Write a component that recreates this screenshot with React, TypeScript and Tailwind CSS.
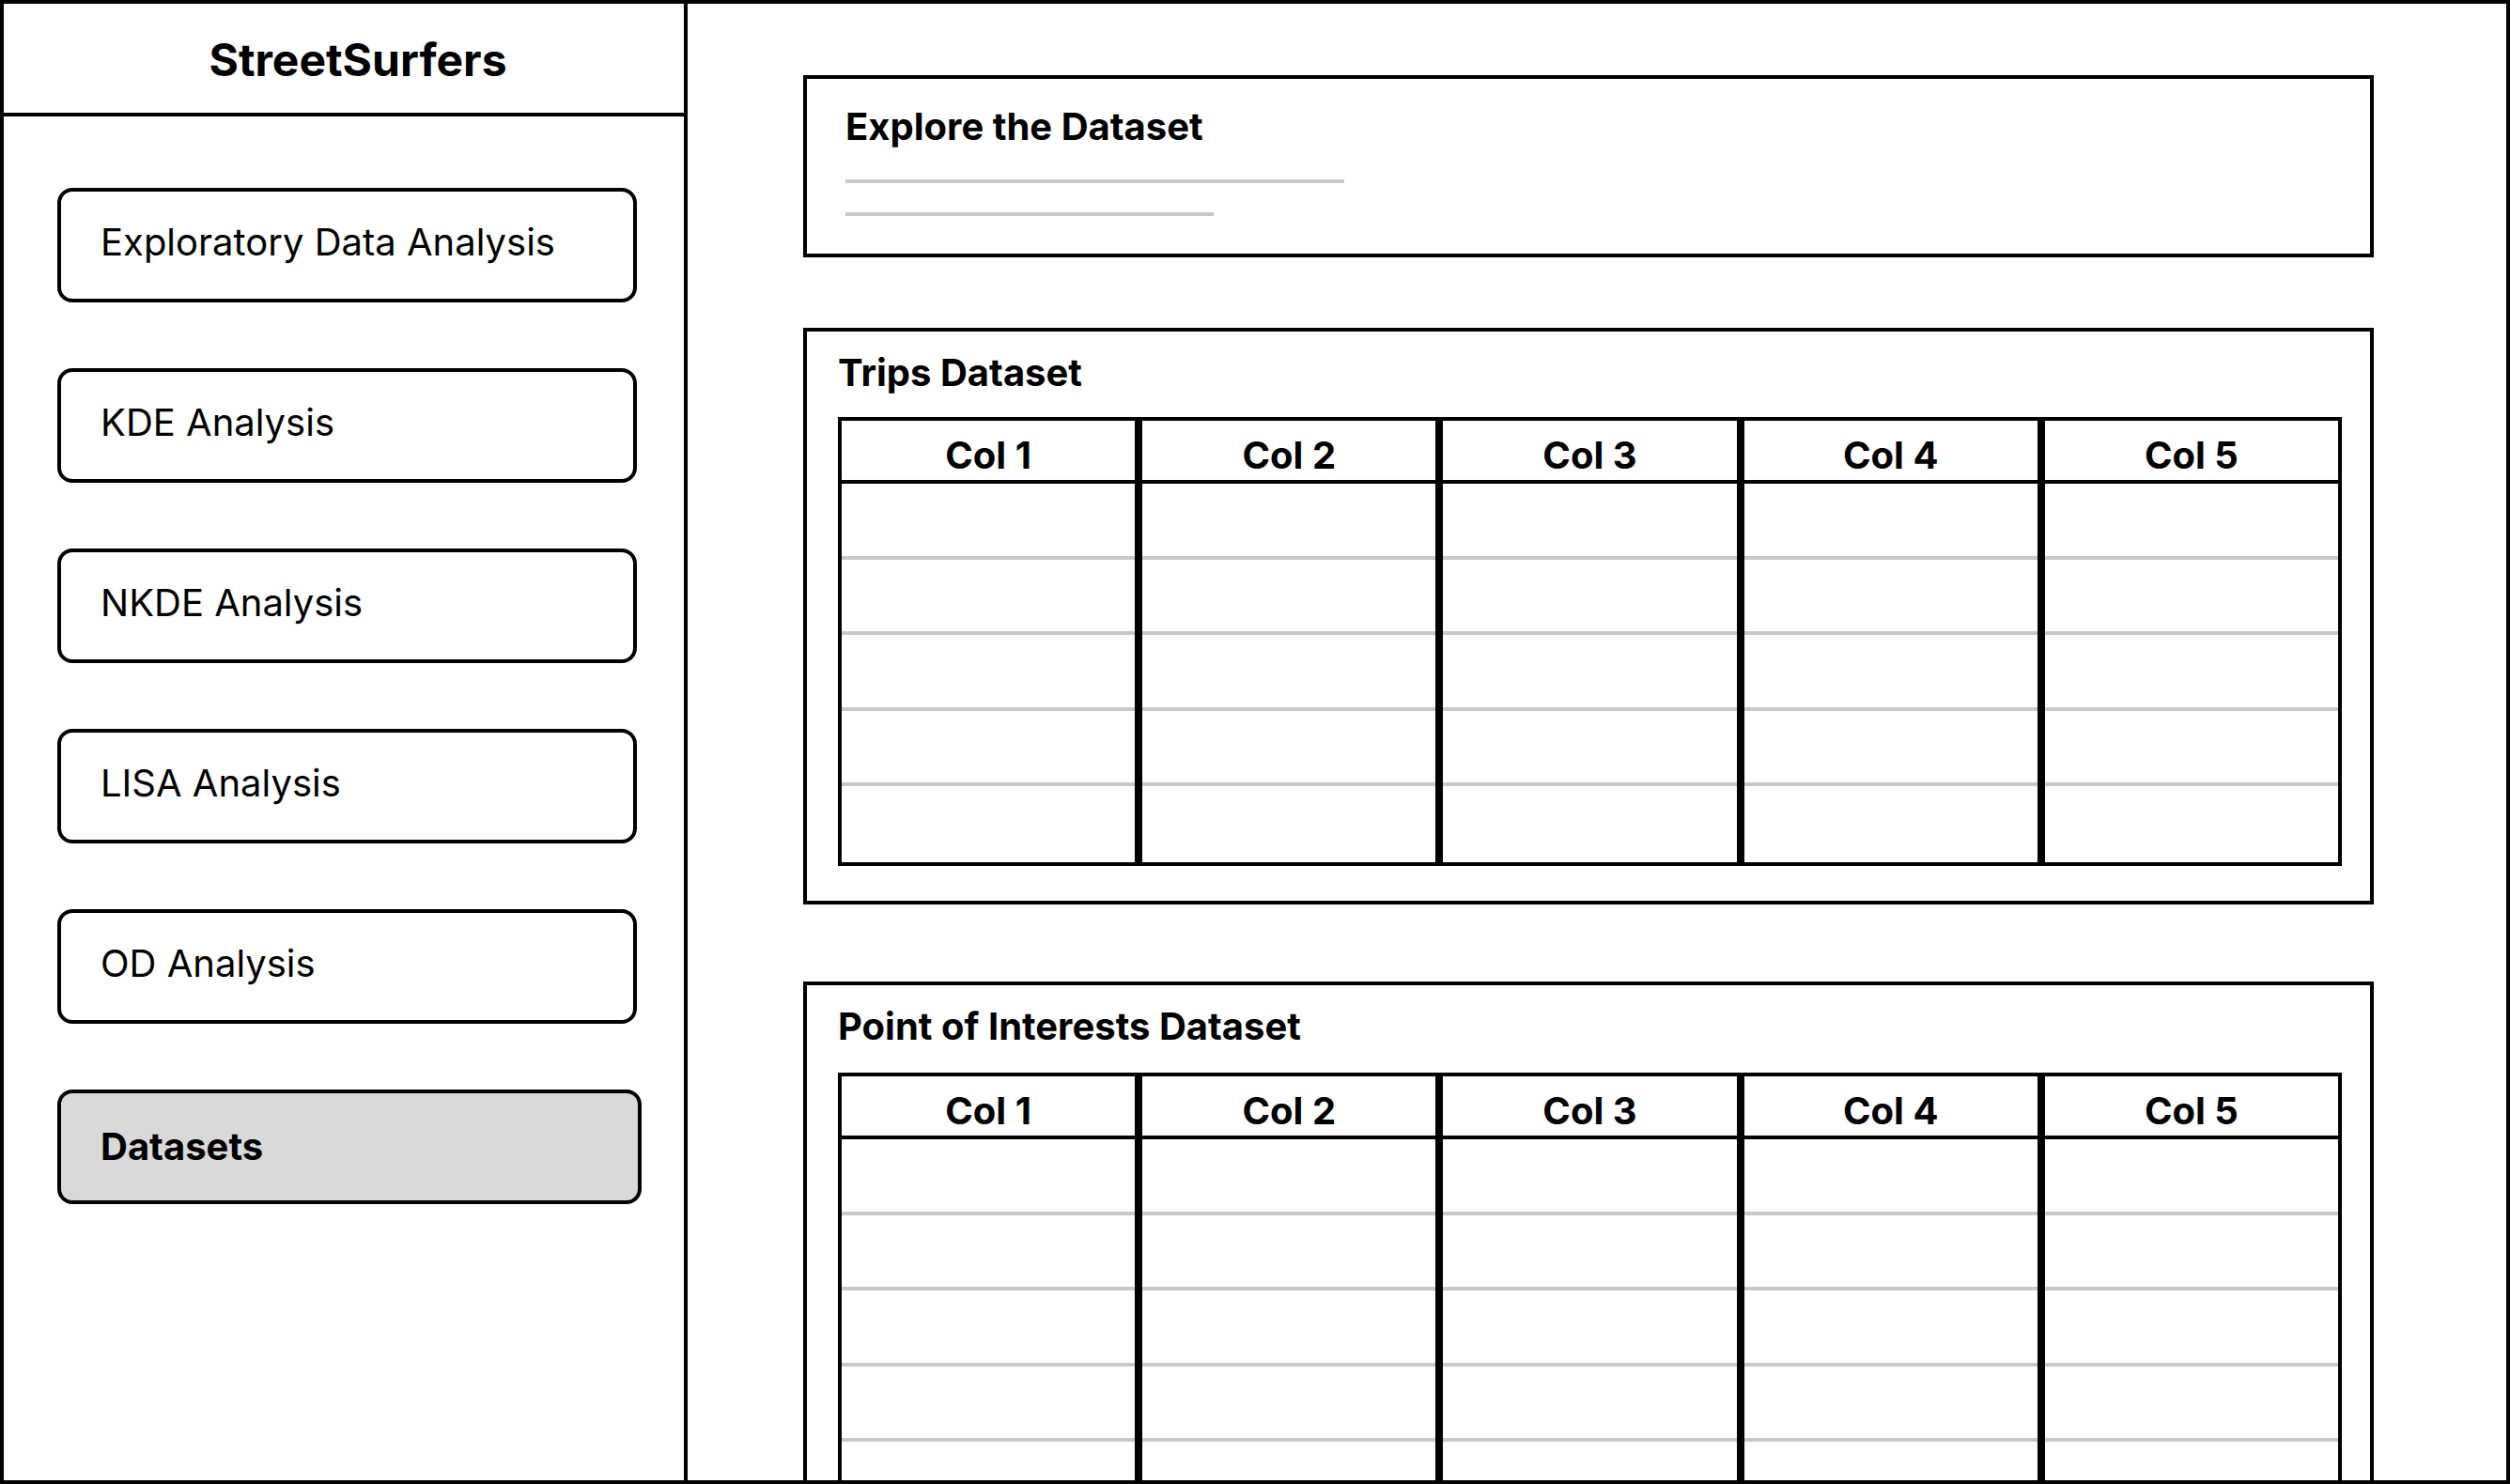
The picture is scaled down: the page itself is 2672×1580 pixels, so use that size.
const navItems = [
  'Exploratory Data Analysis',
  'KDE Analysis',
  'NKDE Analysis',
  'LISA Analysis',
  'OD Analysis',
];

const cols = ['Col 1', 'Col 2', 'Col 3', 'Col 4', 'Col 5'];

function DataTable() {
  return (
    <div className="grid grid-cols-5">
      {cols.map((c) => (
        <div key={c} className="flex flex-col border-4 border-black">
          <div className="h-[67px] border-b-4 border-black flex items-center justify-center pt-[10px] text-[40px] font-bold leading-none">
            {c}
          </div>
          <div className="h-[403px] flex flex-col">
            {[0, 1, 2, 3, 4].map((r) => (
              <div key={r} className="flex-1 flex flex-col">
                <div className="flex-1" />
                {r < 4 && <div className="h-[4px] bg-[#c8c8c8]" />}
              </div>
            ))}
          </div>
        </div>
      ))}
    </div>
  );
}

function DatasetCard({
  title,
  className,
  gap,
}: {
  title: string;
  className?: string;
  gap: string;
}) {
  return (
    <section className={`shrink-0 border-4 border-black pl-[33px] pr-[30px] ${className ?? ''}`}>
      <h2 className="h-[48px] text-[40px] font-bold leading-[48px]">{title}</h2>
      <div className={gap}>
        <DataTable />
      </div>
    </section>
  );
}

export default function App() {
  return (
    <div className="h-[1580px] w-[2672px] overflow-hidden border-4 border-black bg-white text-black flex font-['Inter','Liberation_Sans',sans-serif]">
      <aside className="w-[728px] shrink-0 border-r-4 border-black flex flex-col">
        <div className="h-[120px] shrink-0 border-b-4 border-black flex items-center justify-center pl-[30px] pt-[4px] text-[48px] font-bold">
          StreetSurfers
        </div>
        <nav className="pt-[76px] pl-[57px] flex flex-col gap-[70px]">
          {navItems.map((item) => (
            <button
              key={item}
              className="w-[617px] h-[122px] rounded-[16px] border-4 border-black flex items-center pl-[42px] pb-[6px] text-[40px] text-left"
            >
              {item}
            </button>
          ))}
          <button className="w-[622px] h-[122px] rounded-[16px] border-4 border-black bg-[#d9d9d9] flex items-center pl-[42px] text-[40px] font-bold text-left">
            Datasets
          </button>
        </nav>
      </aside>

      <main className="flex-1 min-w-0 overflow-hidden pl-[123px] pr-[141px] pt-[76px] flex flex-col">
        <section className="h-[194px] shrink-0 border-4 border-black pl-[41px] pt-[27px]">
          <h2 className="h-[48px] text-[40px] font-bold leading-[48px]">Explore the Dataset</h2>
          <div className="mt-[32px] h-[4px] w-[531px] bg-[#c8c8c8]" />
          <div className="mt-[31px] h-[4px] w-[392px] bg-[#c8c8c8]" />
        </section>

        <DatasetCard title="Trips Dataset" gap="mt-[23px]" className="mt-[75px] pt-[20px] pb-[37px]" />
        <DatasetCard title="Point of Interests Dataset" gap="mt-[25px]" className="mt-[82px] pt-[20px] pb-[37px]" />
      </main>
    </div>
  );
}
